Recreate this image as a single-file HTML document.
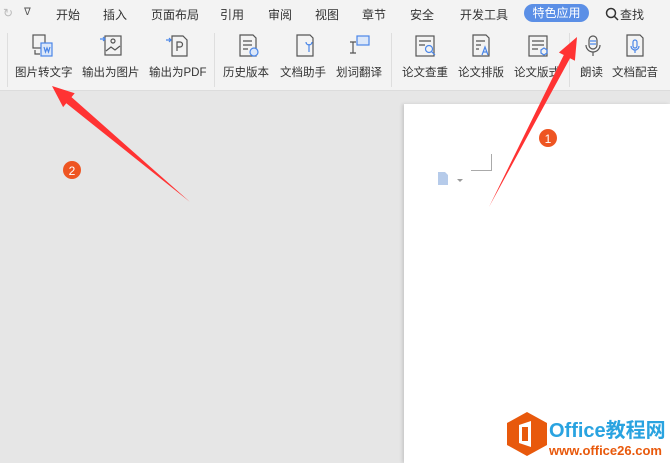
<!DOCTYPE html>
<html><head><meta charset="utf-8"><style>
*{margin:0;padding:0;box-sizing:border-box}
body{width:670px;height:463px;overflow:hidden;background:#e6e6e6;font-family:"Liberation Sans","Noto Sans CJK SC",sans-serif;position:relative}
.menu{position:absolute;left:0;top:0;width:670px;height:27px;background:#f3f3f3;font-size:12px;color:#333}
.menu span{position:absolute;top:6px}
.tool{position:absolute;left:0;top:27px;width:670px;height:64px;background:#f3f3f3;border-bottom:1px solid #dcdcdc}
.lbl{position:absolute;top:37px;font-size:11.5px;color:#333;white-space:nowrap}
.sep{position:absolute;top:6px;width:1px;height:54px;background:#dedede}
svg.ic{position:absolute;top:7px}
.page{position:absolute;left:404px;top:104px;width:266px;height:359px;background:#fff;box-shadow:-2px 0 3px rgba(0,0,0,.12)}
</style></head><body>
<div class="menu">
<span style="left:3px;color:#bbb">↻</span>
<span style="left:24px;font-size:10px;top:7px;color:#555">ᐁ</span>
<span style="left:56px">开始</span><span style="left:103px">插入</span><span style="left:151px">页面布局</span>
<span style="left:220px">引用</span><span style="left:268px">审阅</span><span style="left:315px">视图</span>
<span style="left:362px">章节</span><span style="left:410px">安全</span><span style="left:460px">开发工具</span>
<div style="position:absolute;left:524px;top:4px;width:65px;height:18px;border-radius:9px;background:#5b8fe6;color:#fff;font-size:12px;text-align:center;line-height:18px">特色应用</div>
<svg style="position:absolute;left:605px;top:7px" width="14" height="14" fill="none" stroke="#333" stroke-width="1.5"><circle cx="6" cy="6" r="4.5"/><path d="M9.5 9.5L13 13"/></svg>
<span style="left:620px">查找</span>
</div>
<div class="tool">
<div class="sep" style="left:7px"></div>
<svg class="ic" style="left:31px" width="24" height="24" viewBox="0 0 24 24" fill="none" stroke="#555" stroke-width="1.2"><rect x="2" y="1" width="12" height="13"/><rect x="10" y="9" width="11" height="13" fill="#dbe7f9" stroke="#4a86e8"/><path d="M13 13l1.5 5 1.5-4 1.5 4 1.5-5" stroke="#4a86e8"/><path d="M4 16v4h5"/></svg>
<div class="lbl" style="left:15px">图片转文字</div>
<svg class="ic" style="left:99px" width="24" height="24" viewBox="0 0 24 24" fill="none" stroke="#555" stroke-width="1.2"><rect x="6" y="2" width="16" height="19"/><circle cx="14" cy="7" r="2"/><path d="M7 17l5-4 4 3 5-4"/><path d="M1 5h5M4 3l2 2-2 2" stroke="#4a86e8"/></svg>
<div class="lbl" style="left:82px">输出为图片</div>
<svg class="ic" style="left:165px" width="24" height="24" viewBox="0 0 24 24" fill="none" stroke="#555" stroke-width="1.2"><path d="M7 2h11l4 4v16H7z"/><path d="M12 17V8h3a2.5 2.5 0 010 5h-3" /><path d="M1 6h5M4 4l2 2-2 2" stroke="#4a86e8"/></svg>
<div class="lbl" style="left:149px">输出为PDF</div>
<div class="sep" style="left:214px"></div>
<svg class="ic" style="left:237px" width="24" height="24" viewBox="0 0 24 24" fill="none" stroke="#555" stroke-width="1.2"><path d="M3 1h13l3 3v18H3z"/><path d="M6 7h9M6 11h9M6 15h5"/><circle cx="17" cy="18" r="4" fill="#dbe7f9" stroke="#4a86e8"/></svg>
<div class="lbl" style="left:223px">历史版本</div>
<svg class="ic" style="left:294px" width="24" height="24" viewBox="0 0 24 24" fill="none" stroke="#555" stroke-width="1.2"><path d="M3 1h13l3 3v18H3z"/><path d="M15 10v8M12 8a3 3 0 006 0" stroke="#4a86e8"/></svg>
<div class="lbl" style="left:280px">文档助手</div>
<svg class="ic" style="left:347px" width="24" height="24" viewBox="0 0 24 24" fill="none" stroke="#555" stroke-width="1.2"><path d="M3 8h6M6 8v11M3 19h6"/><rect x="10" y="2" width="12" height="9" fill="#dbe7f9" stroke="#4a86e8"/></svg>
<div class="lbl" style="left:336px">划词翻译</div>
<div class="sep" style="left:391px"></div>
<svg class="ic" style="left:414px" width="24" height="24" viewBox="0 0 24 24" fill="none" stroke="#555" stroke-width="1.2"><rect x="2" y="2" width="18" height="20"/><path d="M5 7h12M5 11h6"/><circle cx="15" cy="15" r="3.5" stroke="#4a86e8"/><path d="M17.5 17.5L21 21" stroke="#4a86e8"/></svg>
<div class="lbl" style="left:402px">论文查重</div>
<svg class="ic" style="left:470px" width="24" height="24" viewBox="0 0 24 24" fill="none" stroke="#555" stroke-width="1.2"><path d="M3 1h13l3 3v18H3z"/><path d="M6 7h9M6 11h5M6 15h3"/><path d="M12 21l3-8 3 8M13 18h4" stroke="#4a86e8"/></svg>
<div class="lbl" style="left:458px">论文排版</div>
<svg class="ic" style="left:527px" width="24" height="24" viewBox="0 0 24 24" fill="none" stroke="#555" stroke-width="1.2"><rect x="2" y="2" width="18" height="20"/><path d="M5 7h12M5 11h12M5 15h6"/><path d="M17 14l3 2v3l-3 2-3-2v-3z" stroke="#4a86e8"/></svg>
<div class="lbl" style="left:514px">论文版式</div>
<div class="sep" style="left:569px"></div>
<svg class="ic" style="left:581px" width="24" height="24" viewBox="0 0 24 24" fill="none" stroke="#555" stroke-width="1.2"><rect x="8" y="2" width="8" height="13" rx="4"/><path d="M9 7h6M9 10h6" stroke="#4a86e8"/><path d="M5 11a7 7 0 0014 0M12 18v4"/></svg>
<div class="lbl" style="left:580px">朗读</div>
<svg class="ic" style="left:623px" width="24" height="24" viewBox="0 0 24 24" fill="none" stroke="#555" stroke-width="1.2"><path d="M4 1h13l3 3v18H4z"/><rect x="10" y="6" width="4" height="8" rx="2" stroke="#4a86e8"/><path d="M8 12a4 4 0 008 0M12 16v3" stroke="#4a86e8"/></svg>
<div class="lbl" style="left:612px">文档配音</div>
</div>
<div class="page">
<svg style="position:absolute;left:33px;top:67px" width="28" height="16"><path d="M1 1h7l3 3v10H1z" fill="#b6cbea"/><path d="M20 8l3 3 3-3z" fill="#999"/></svg>
<div style="position:absolute;left:67px;top:50px;width:21px;height:17px;border-right:1px solid #aaa;border-bottom:1px solid #aaa"></div>
<svg style="position:absolute;left:103px;top:306px" width="163" height="50"><path d="M20 2l20 11v22L20 46 0 35V13z" fill="#e8590c"/><path d="M12 15l12-4v26l-12-4z" fill="#fff"/><rect x="15" y="17" width="6" height="14" fill="#e8590c"/><text x="42" y="27" font-family="Liberation Sans,Noto Sans CJK SC,sans-serif" font-size="20" font-weight="bold" fill="#29a3e0">Office教程网</text><text x="42" y="45" font-family="Liberation Sans,sans-serif" font-size="13" font-weight="bold" fill="#e8590c">www.office26.com</text></svg>
</div>
<svg style="position:absolute;left:0;top:0" width="670" height="463">
<polygon points="190,202 71.5,97.1 74.7,93.3 52,86 63.1,107.1 66.3,103.3" fill="#f33"/>
<polygon points="489,207 570,58.2 574.9,60.7 577,37 558.9,52.5 563.8,55" fill="#f33"/>
<circle cx="72" cy="170" r="9" fill="#e52"/><text x="72" y="175" text-anchor="middle" fill="#fff" font-size="12" font-family="Liberation Sans">2</text>
<circle cx="548" cy="138" r="9" fill="#e52"/><text x="548" y="143" text-anchor="middle" fill="#fff" font-size="12" font-family="Liberation Sans">1</text>
</svg>
</body></html>
